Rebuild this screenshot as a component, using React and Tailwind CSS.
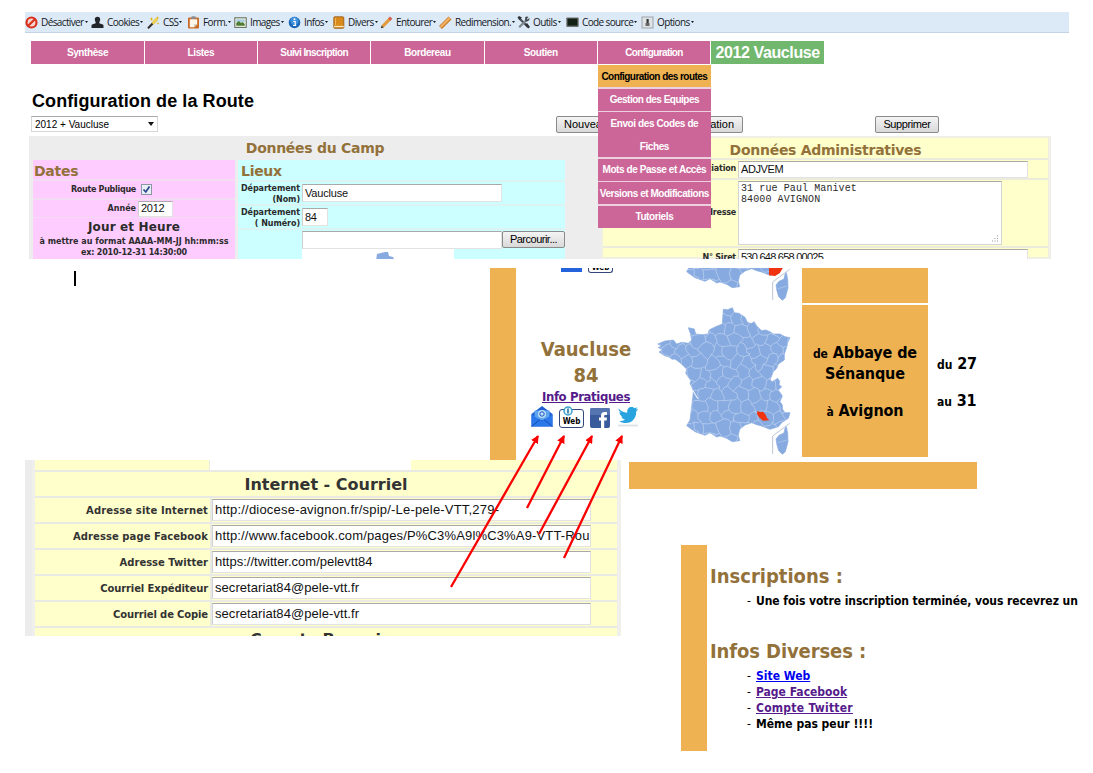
const tools = [
  ["Désactiver", "w-[66px]", "ban"],
  ["Cookies", "w-[56px]", "user"],
  ["CSS", "w-[40px]", "wand"],
  ["Form.", "w-[47px]", "clip"],
  ["Images", "w-[54px]", "image"],
  ["Infos", "w-[44px]", "info"],
  ["Divers", "w-[48px]", "book"],
  ["Entourer", "w-[59px]", "pencil"],
  ["Redimension.", "w-[78px]", "ruler"],
  ["Outils", "w-[49px]", "tools"],
  ["Code source", "w-[75px]", "screen"],
  ["Options", "w-[54px]", "option"],
];

function ToolIcon({ name }) {
  const art = {
    ban: (
      <>
        <circle cx="6.5" cy="6.5" r="5" fill="#f7d6d0" stroke="#d8321f" strokeWidth="2.2" />
        <path d="M3.2 9.8 9.8 3.2" stroke="#d8321f" strokeWidth="2.2" />
      </>
    ),
    user: <path d="M6.500 .8c1.700 0 2.700 1.100 2.700 2.600 0 1.300-.9 2-.9 3.600 0 .8 4.200.8 4.200 2.500V12H.5V9.500C.5 7.800 4.700 7.800 4.700 7c0-1.600-.9-2.300-.9-3.600C3.800 1.900 4.800.8 6.500.8z" fill="#22262b" />,
    wand: (
      <>
        <path d="M1 12.300 9 4" stroke="#33302a" strokeWidth="2" />
        <path d="M5.500 7.600l4.500-4.600" stroke="#f0d050" strokeWidth="3" />
        <path d="M4.500 1l.6 1.400L6.500 3l-1.400.6-.6 1.400-.6-1.400L2.500 3l1.400-.6zM11 6l.4 1 1 .4-1 .4-.4 1-.4-1-1-.4 1-.4zM10.500 0l.5 1.500 1.500.5-1.500.5-.5 1.500-.5-1.500L8.500 2 10 1.500z" fill="#e3b411" />
      </>
    ),
    clip: (
      <>
        <rect x="1" y="1.500" width="11" height="11" rx="1" fill="#c96a28" />
        <path d="M2.800 3.200h7.400v5l-3 3H2.800z" fill="#fbf5ea" />
        <path d="M7.200 11.200v-3h3z" fill="#c9bfae" />
        <rect x="4.300" y=".3" width="4.400" height="2.800" rx="1" fill="#8c8f94" />
      </>
    ),
    image: (
      <>
        <rect x=".8" y="1.800" width="11.400" height="9.600" fill="#f2f3e8" stroke="#5b6b4e" />
        <path d="M2.300 3.300h8.400v3H2.300z" fill="#a9cfe0" />
        <path d="M2.300 9.800V7l2.500-2 2.200 2 1.500-1 2.200 2v1.800z" fill="#4c7c30" />
      </>
    ),
    info: (
      <>
        <circle cx="6.500" cy="6.500" r="5.800" fill="#1766b8" />
        <circle cx="6.500" cy="5" r="4.200" fill="#3f90dc" />
        <path d="M5.200 5.500h2v3.800h.8M5 9.500h3.200" stroke="#fff" strokeWidth="1.200" fill="none" />
        <circle cx="6.500" cy="3.300" r="1" fill="#fff" />
      </>
    ),
    book: (
      <>
        <rect x="1.800" y=".8" width="10" height="11.500" rx="1" fill="#d98a1c" stroke="#94550d" strokeWidth=".8" />
        <path d="M2 10.500h9.800" stroke="#fbe6b8" strokeWidth="1.300" />
        <path d="M3.500 2v7" stroke="#f1b757" />
      </>
    ),
    pencil: (
      <>
        <path d="M2.500 10.500 10 2.800" stroke="#e39a3b" strokeWidth="3.200" />
        <path d="M9.300 3.500 11.200 1.600" stroke="#d65b53" strokeWidth="3.200" />
        <path d="M.8 12.300 1.700 9.400 3.700 11.400z" fill="#3b2d20" />
      </>
    ),
    ruler: (
      <>
        <path d="M1.500 11.500 11 2" stroke="#c9731f" strokeWidth="4" />
        <path d="M1.700 11 10.800 1.900" stroke="#efb265" strokeWidth="2.400" />
      </>
    ),
    tools: (
      <>
        <path d="M2 2 11 11" stroke="#4a5058" strokeWidth="2.200" />
        <path d="M2.200 11.200 9.500 4" stroke="#7d858e" strokeWidth="2.300" />
        <path d="M8 1.500a3 3 0 0 1 3.500-.5L9.800 2.800l.8.8 1.800-1.700a3 3 0 0 1-3.900 3.500z" fill="#41474e" />
        <path d="M.5 1.500 2 0l3 1.500L2.500 4z" fill="#2f3338" />
        <path d="M8 8.500 10 7l3 4-1.800 1.500z" fill="#2f3338" />
      </>
    ),
    screen: (
      <>
        <rect x=".3" y="1.500" width="12.400" height="9.600" rx=".8" fill="#6c7070" />
        <rect x="1.500" y="2.600" width="10" height="7" fill="#142013" />
      </>
    ),
    option: (
      <>
        <rect x="1" y="1" width="11" height="11" fill="#dfe3e6" stroke="#9ca3a9" />
        <path d="M5.500 3h2.200v4H5.500z" fill="#333" />
        <path d="M4.500 7h4v3h-4z" fill="#666" />
      </>
    ),
  };
  return (
    <svg viewBox="0 0 13 13" className="size-[13px] shrink-0" fill="none">
      {art[name]}
    </svg>
  );
}

const menu = [
  ["Gestion des Equipes", "h-[22px] tracking-[-0.5px]"],
  ["Envoi des Codes de Fiches", "h-[45px] tracking-[-0.4px] px-2"],
  ["Mots de Passe et Accès", "h-[22px] tracking-[-0.42px] whitespace-nowrap"],
  ["Versions et Modifications", "h-[22px] tracking-[-0.46px] whitespace-nowrap"],
  ["Tutoriels", "h-[22px] tracking-[-0.4px]"],
];

function Toolbar() {
  return (
    <div className="ml-[25px] flex h-[21px] w-[1044px] items-center border-b border-[#c3d3e4] bg-[#dce9f7] font-['Open_Sans',sans-serif] text-[10px] tracking-[-0.62px] text-[#15181c]">
      {tools.map(([label, width, icon]) => (
        <div key={label} className={"flex shrink-0 items-center " + width}>
          <ToolIcon name={icon} />
          <span className="ml-[3px] whitespace-nowrap">{label}</span>
          <svg viewBox="0 0 3 2" className="ml-px h-[2px] w-[3px] shrink-0">
            <path d="M0 0h3L1.500 2z" fill="#15181c" />
          </svg>
        </div>
      ))}
    </div>
  );
}

function Nav() {
  const cell = "flex h-[23px] w-[112.3px] items-center justify-center bg-[#cc6699] ";
  return (
    <nav className="mt-[8px] ml-[31.4px] flex gap-px font-['Liberation_Sans',sans-serif] text-[10px] font-bold tracking-[-0.6px] text-white">
      {["Synthèse", "Listes", "Suivi Inscription", "Bordereau", "Soutien"].map((t) => (
        <div key={t} className={cell + (t.length < 10 ? "tracking-[-0.4px]" : "")}>{t}</div>
      ))}
      <div className="relative">
        <div className={cell}>Configuration</div>
        <div className="absolute top-[24px] left-0 z-10 flex w-[113px] flex-col gap-[1.600px] bg-[#ecd0de] text-center">
          <div className="flex h-[22px] items-center justify-center bg-[#eeb253] tracking-[-0.54px] whitespace-nowrap text-black">Configuration des routes</div>
          {menu.map(([t, c]) => (
            <div key={t} className={"flex items-center justify-center bg-[#cc6699] leading-[23px] " + c}>{t}</div>
          ))}
        </div>
      </div>
      <div className="flex h-[23px] w-[113px] items-center justify-center bg-[#71b76e] text-[16px] tracking-[-0.4px]">2012 Vaucluse</div>
    </nav>
  );
}

const button = "flex h-[17px] items-center justify-center rounded-[2px] border border-[#8a8a8a] bg-linear-to-b from-[#f4f4f4] to-[#d9d9d9] font-['Liberation_Sans',sans-serif] text-[11px] font-normal whitespace-nowrap text-black ";
const field = "flex items-center overflow-hidden border border-[#e2e2e2] border-t-[#a9a9a9] border-l-[#cfcfcf] bg-white px-[2px] font-['Liberation_Sans',sans-serif] font-normal whitespace-nowrap text-[#111] ";
const title = "font-['DejaVu_Sans',sans-serif] font-bold text-[14px] tracking-[-0.28px] text-[#92713a] ";
const tiny = "font-['DejaVu_Sans',sans-serif] font-bold text-[8px] text-[#2b2b2b] ";

function Dates() {
  return (
    <div className={"w-[202px] bg-[#ffccff] " + tiny}>
      <h3 className={title + "h-[21px] border-b-2 border-[#f3dcf3] pl-px leading-[22px]"}>Dates</h3>
      <div className="flex h-[19px] items-center border-b-2 border-[#f3dcf3]">
        <span className="w-[103px] text-right tracking-[-0.28px]">Route Publique</span>
        <span className="ml-[5px] flex size-[11px] items-center justify-center border border-[#8b97a5] bg-[#e9eff6]">
          <svg viewBox="0 0 9 9" className="size-[9px]">
            <path d="M1.500 4.500 3.800 7 7.500 1.500" stroke="#28468c" strokeWidth="1.700" fill="none" />
          </svg>
        </span>
      </div>
      <div className="flex h-[18px] items-center border-b border-[#f3dcf3]">
        <span className="w-[103px] text-right">Année</span>
        <span className={field + "ml-[2px] h-[16px] w-[35px] text-[11px] tracking-[-0.3px]"}>2012</span>
      </div>
      <div className="pt-[1px] text-center whitespace-nowrap">
        <p className="text-[12px] leading-[16px] tracking-[0.14px]">Jour et Heure</p>
        <p className="pt-[1px] leading-[11px]">à mettre au format AAAA-MM-JJ hh:mm:ss</p>
        <p className="leading-[11px] tracking-[-0.19px]">ex: 2010-12-31 14:30:00</p>
      </div>
    </div>
  );
}

function Lieux() {
  const label = "w-[63px] shrink-0 pr-[1px] pt-[1px] text-right leading-[11px] tracking-[-0.06px] whitespace-nowrap";
  return (
    <div className={"ml-[3px] w-[327px] bg-[#ccffff] " + tiny}>
      <h3 className={title + "h-[22px] border-b-2 border-[#dcf3f3] pl-[3px] leading-[22px]"}>Lieux</h3>
      <div className="flex h-[24px] items-center border-b-2 border-[#dcf3f3]">
        <div className={label}>Département<br />(Nom)</div>
        <span className={field + "ml-[1px] h-[18px] w-[200px] text-[11px] tracking-[-0.18px]"}>Vaucluse</span>
      </div>
      <div className="flex h-[24px] items-center border-b-2 border-[#dcf3f3]">
        <div className={label}>Département<br />( Numéro)</div>
        <span className={field + "ml-[1px] h-[18px] w-[26px] text-[11px] tracking-[-0.3px]"}>84</span>
      </div>
      <div className="ml-[64px] flex pt-[1px]">
        <span className={field + "h-[18px] w-[200px]"} />
        <span className={button + "w-[63px] border-[#6f7f8f] tracking-[-0.5px]"}>Parcourir...</span>
      </div>
      <div className="ml-[64px] h-[20px] w-[152px] bg-white pt-[2px]">
        <svg viewBox="0 0 20 10" className="ml-[74px] h-[10px] w-[20px]">
          <path d="M0 10 1 3 9 1l3 0 1 4 4 1 2 4z" fill="#87aae0" />
        </svg>
      </div>
    </div>
  );
}

function Admin() {
  const row = "flex border-b-2 border-[#ececdc] ";
  const label = "w-[133px] shrink-0 text-right tracking-[-0.2px]";
  return (
    <div className="w-[450px] border-2 border-r-[3px] border-[#efefe4] bg-[#ffffcc] pt-[1px]">
      <h2 className={title + "h-[21px] border-b-2 border-[#ececdc] text-center leading-[22px]"}>Données Administratives</h2>
      <div className={tiny}>
        <div className={row + "h-[20px] items-center"}>
          <span className={label}>Association</span>
          <span className={field + "ml-[2px] h-[17px] w-[290px] text-[11px] tracking-[-0.4px]"}>ADJVEM</span>
        </div>
        <div className={row + "h-[68px] items-center"}>
          <span className={label}>Adresse</span>
          <div className="ml-[2px] flex h-[64px] w-[264px] items-end justify-between border border-[#d5d5d5] border-t-[#a9a9a9] bg-white pl-[2px]">
            <p className="self-start font-['Liberation_Mono',monospace] text-[10px] leading-[11px] font-normal tracking-[0.1px] whitespace-nowrap pt-[1px]">
              31 rue Paul Manivet<br />84000 AVIGNON
            </p>
            <svg viewBox="0 0 10 10" className="size-[10px]">
              <path d="M1 7h1M3.500 7h1M6 7h1M3.500 4.500h1M6 4.500h1M6 2h1" stroke="#999" />
            </svg>
          </div>
        </div>
        <div className="flex h-[19px] items-center">
          <span className={label}>N° Siret</span>
          <span className={field + "ml-[2px] h-[18px] w-[290px] text-[11px] tracking-[-0.75px]"}>530 648 658 00025</span>
        </div>
      </div>
    </div>
  );
}

function TopPanel() {
  return (
    <section className="flex h-[259px] flex-col overflow-hidden pt-[12px]">
      <Toolbar />
      <Nav />
      <h1 className="mt-[27px] ml-[32px] font-['Liberation_Sans',sans-serif] text-[18px] leading-[21px] font-bold tracking-[0.08px] text-black">Configuration de la Route</h1>
      <div className="mt-[4px] ml-[31px] flex h-[17px] shrink-0">
        <div className="flex h-[16px] w-[127px] items-center justify-between border border-[#d6d6d6] border-t-[#a9a9a9] bg-white pr-[3px] pl-[3px] font-['Liberation_Sans',sans-serif] text-[10px] text-black">
          2012 + Vaucluse
          <svg viewBox="0 0 6 4" className="h-[4px] w-[6px]">
            <path d="M0 0h6L3 4z" fill="#111" />
          </svg>
        </div>
        <span className={button + "ml-[398px] w-[60px]"}>Nouveau</span>
        <span className={button + "ml-[64px] w-[63px] justify-end pr-[8px]"}>Validation</span>
        <span className={button + "ml-[132px] w-[64px] tracking-[-0.4px]"}>Supprimer</span>
      </div>
      <div className="mt-[3px] ml-[29px] flex h-[123px] shrink-0 overflow-hidden">
        <div className="h-[123px] w-[572px] bg-[#ededed]">
          <h2 className={title + "h-[24px] text-center leading-[24px]"}>Données du Camp</h2>
          <div className="ml-[4px] flex h-[99px]">
            <Dates />
            <Lieux />
          </div>
        </div>
        <Admin />
      </div>
    </section>
  );
}

const outline = "M235 148 248 149 262 143 268 158 282 160 300 172 308 188 320 190 328 185 335 198 350 212 362 210 375 215 385 222 405 222 420 230 435 233 428 248 425 262 418 282 418 300 400 312 395 325 385 335 375 360 382 365 398 355 404 364 402 374 410 380 400 390 412 408 405 425 412 435 412 447 420 458 435 458 430 475 410 488 400 500 375 508 350 498 335 494 320 488 300 495 284 508 280 525 284 542 262 545 245 535 225 528 215 531 195 518 180 526 150 515 125 497 135 480 140 440 144 405 145 392 135 370 138 362 122 340 125 328 118 320 105 308 90 297 82 298 70 290 60 288 42 276 52 270 40 262 50 258 38 252 60 243 85 240 95 252 110 247 130 250 140 240 136 220 130 203 148 207 152 222 172 224 190 222 192 210 212 200 232 192z";
const corsica = "M424 500 428 520 429 545 421 575 412 583 401 572 396 555 393 537 402 526 417 519 420 505z";

function buildBorders() {
  const rnd = (a, b) => {
    const s = Math.sin(a * 12.9898 + b * 78.233) * 43758.5453;
    return s - Math.floor(s) - 0.5;
  };
  const at = (x, y) => [x + rnd(x, y) * 17, y + rnd(y, x) * 15];
  const link = (p, q) => {
    const mx = (p[0] + q[0]) / 2 + rnd(p[0], q[1]) * 11;
    const my = (p[1] + q[1]) / 2 + rnd(q[0], p[1]) * 11;
    return `M${p[0].toFixed(1)} ${p[1].toFixed(1)}L${mx.toFixed(1)} ${my.toFixed(1)} ${q[0].toFixed(1)} ${q[1].toFixed(1)}`;
  };
  const w = 36;
  const h = 33;
  let d = "";
  for (let r = 0; r < 14; r++) {
    for (let c = 0; c < 13; c++) {
      const x = 20 + c * w + (r % 2 ? w / 2 : 0);
      const y = 130 + r * h;
      const left = at(x, y);
      const top = at(x + w / 2, y - 10);
      const right = at(x + w, y);
      const down = at(x, y + h - 10);
      d += link(left, top) + link(top, right) + link(left, down);
    }
  }
  return d;
}
const borders = buildBorders();

function France({ children }) {
  return (
    <>
      <path d={outline} fill="#87aae0" stroke="#87aae0" strokeWidth="2" strokeLinejoin="round" />
      <path d={borders} clipPath="url(#france)" fill="none" stroke="#c9daf3" strokeWidth="1.800" />
      <path d="M144 392 158 416" stroke="#fff" strokeWidth="3" />
      <path d={corsica} fill="#87aae0" stroke="#87aae0" strokeWidth="2" />
      <path d="M399 548 426 540" stroke="#c9daf3" strokeWidth="1.500" />
      <path d="M383 582V528L434 490" fill="none" stroke="#a9b8cc" strokeWidth="2.400" />
      {children}
    </>
  );
}

function MailIcon() {
  return (
    <svg viewBox="0 0 21 21" className="h-[21px] w-[22px]">
      <path d="M0 8 10.500 0 21 8v12.500H0z" fill="#1f5fd0" />
      <path d="M3 4.500h15V14H3z" fill="#5da4f0" />
      <circle cx="10.500" cy="8" r="4" fill="#bfe0fb" />
      <circle cx="10.500" cy="8" r="2.200" fill="none" stroke="#1b4fb8" />
      <path d="M0 8.500 10.500 15 21 8.500v12H0z" fill="#2a78ea" />
      <path d="M0 20.500 8.500 13.500M21 20.500 12.500 13.500" stroke="#174cb5" />
    </svg>
  );
}

function WebIcon() {
  return (
    <div className="relative mt-[3px] flex h-[19px] w-[25px] items-end justify-center rounded-[3px] border border-[#33477c] bg-white">
      <span className="font-['DejaVu_Sans_Condensed','DejaVu_Sans',sans-serif] text-[8px] leading-[11px] font-bold text-black">Web</span>
      <svg viewBox="0 0 10 10" className="absolute -top-[4px] left-[3px] size-[10px]">
        <circle cx="5" cy="5" r="4" fill="#e4f5fb" stroke="#3aa0c8" strokeWidth="1.500" />
        <path d="M5 2.500v5" stroke="#226f99" strokeWidth="1.500" />
      </svg>
    </div>
  );
}

function FacebookIcon() {
  return (
    <svg viewBox="0 0 20 20" className="h-[20px] w-[20px]">
      <rect width="20" height="20" rx="2" fill="#3b5c9c" />
      <path d="M0 2a2 2 0 0 1 2-2h16a2 2 0 0 1 2 2v5H0z" fill="#5475b0" />
      <path d="M11 20v-7.500H9V9.500h2V7.800C11 5 12.500 4 14.800 4h2.200v3h-1.400c-1.100 0-1.400.4-1.400 1.300v1.200H17l-.4 3h-2.400V20z" fill="#fff" />
    </svg>
  );
}

function TwitterIcon() {
  return (
    <svg viewBox="0 0 22 21" className="h-[21px] w-[22px]">
      <path d="M1.500 2.500c2.300 2.700 5 4 8.800 4.200C9.700 3 12 1 14.500 1c1.300 0 2.300.5 3.100 1.300l2.800-1-1.500 2.300 2.300-.5-2 2.300C19.500 12 15 17 8.800 17c-2.600 0-4.700-.6-6.600-1.800 2.200.1 4-.4 5.800-1.700-2-.2-3.200-1.300-3.800-2.900h1.700C3.800 10 2.500 8.500 2.400 6.300l1.800.5C2.200 5.500 1.500 4 1.500 2.500z" fill="#27a4e0" />
      <path d="M1 19.500h20" stroke="#dfe3e6" strokeWidth="2" />
    </svg>
  );
}

const tahoma = "font-['DejaVu_Sans_Condensed','DejaVu_Sans',sans-serif] font-bold ";

function MapPanel() {
  const small = "text-[12px] leading-none";
  return (
    <section className="mt-[9px] flex h-[192px]">
      <div className="mt-[3px] ml-[74px] h-[15px] w-[2px] bg-black" />
      <div className="ml-[414px] w-[26px] bg-[#eeb253]" />
      <div className={"flex w-[140px] flex-col items-center overflow-hidden " + tahoma}>
        <div className="flex h-[5px] w-full pl-[45px]">
          <span className="h-[4px] w-[21px] bg-[#2463dc]" />
          <span className="ml-[6px] flex h-[5px] w-[25px] items-end justify-center overflow-hidden rounded-b-[3px] border border-t-0 border-[#33477c] text-[8px] leading-[9px] text-black">Web</span>
        </div>
        <p className="mt-[63px] text-[20px] leading-[26px] text-[#92713a]">Vaucluse</p>
        <p className="text-[20px] leading-[26px] text-[#92713a]">84</p>
        <a className="mt-px text-[13px] leading-[16px] tracking-[-0.38px] text-[#551a8b] underline">Info Pratiques</a>
        <div className="mt-px flex w-full gap-[6px] pl-[15px]">
          <MailIcon />
          <WebIcon />
          <div className="pt-[2px]"><FacebookIcon /></div>
          <div className="ml-[1px]"><TwitterIcon /></div>
        </div>
      </div>
      <svg viewBox="33 24 438 576" className="h-[192px] w-[146px]">
        <clipPath id="france"><path d={outline} /></clipPath>
        <g transform="translate(0 -462)">
          <France>
            <path d="M372 470 412 470 412 488 404 502 390 510 372 508z" fill="#f0320f" />
          </France>
        </g>
        <France>
          <path d="M337 453 346 456 354 455 362 464 366 474 373 481 354 482 342 472 336 462z" fill="#f0320f" />
        </France>
      </svg>
      <div className="flex w-[126px] flex-col">
        <div className="h-[35px] bg-[#eeb253]" />
        <div className={"mt-[2px] h-[152px] bg-[#eeb253] pt-[37px] text-center text-[16px] leading-[21px] tracking-[-0.1px] text-black " + tahoma}>
          <p className="h-[21px]"><span className={small}>de</span> Abbaye de</p>
          <p className="h-[21px]">Sénanque</p>
          <p className="mt-[16px] h-[21px]"><span className={small}>à</span> Avignon</p>
        </div>
      </div>
      <div className={"ml-[9px] pt-[85px] text-[16px] leading-[21px] tracking-[-0.1px] whitespace-nowrap text-black " + tahoma}>
        <p className="h-[21px]"><span className={small}>du</span> 27</p>
        <p className="mt-[16px] h-[21px]"><span className={small}>au</span> 31</p>
      </div>
    </section>
  );
}

const rows = [
  ["Adresse site Internet", "http://diocese-avignon.fr/spip/-Le-pele-VTT,279-", "tracking-[0.13px]", "tracking-[0.2px]"],
  ["Adresse page Facebook", "http://www.facebook.com/pages/P%C3%A9l%C3%A9-VTT-Route", "tracking-[0.08px]", "tracking-[0.16px]"],
  ["Adresse Twitter", "https://twitter.com/pelevtt84", "tracking-[0px]", "tracking-[0px]"],
  ["Courriel Expéditeur", "secretariat84@pele-vtt.fr", "tracking-[-0.1px]", "tracking-[0.06px]"],
  ["Courriel de Copie", "secretariat84@pele-vtt.fr", "tracking-[-0.14px]", "tracking-[0.06px]"],
];

function Internet() {
  const heading = "font-['DejaVu_Sans',sans-serif] text-[16px] font-bold text-[#333] whitespace-nowrap ";
  return (
    <div className="flex h-[176px] w-[596px] overflow-hidden border-l-[7px] border-[#ececec] bg-[#efefec] pl-[3px]">
      <div className="w-[582px] bg-[#ffffcc]">
        <div className="flex h-[12px] border-b-2 border-[#eaeae4]">
          <div className="w-[175px] border-r border-[#eaeae4]" />
          <div className="w-[201px] bg-white" />
        </div>
        <h3 className={heading + "flex h-[26px] items-center justify-center border-b-2 border-[#eaeae4] pt-px"}>Internet - Courriel</h3>
        {rows.map(([label, value, lt, vt]) => (
          <div key={label} className="flex h-[26px] items-center border-b-2 border-[#eaeae4]">
            <span className={"w-[173px] text-right font-['DejaVu_Sans',sans-serif] text-[10px] font-bold whitespace-nowrap text-[#333] " + lt}>{label}</span>
            <div className="ml-[2px] h-[24px] w-[401px] border-l-2 border-[#eaeae4] pt-[1px]">
              <div className={field + "h-[22px] w-[379px] text-[13px] " + vt}>{value}</div>
            </div>
          </div>
        ))}
        <p className={heading + "pl-[215px] pt-[2px] leading-[20px] tracking-[-0.35px]"}>Compte Bancaire</p>
      </div>
    </div>
  );
}

function Infos() {
  const h = "text-[20px] leading-[24px] text-[#92713a]";
  const dash = <span className="inline-block w-[9px] font-normal">-</span>;
  return (
    <div className="ml-[52px] flex h-[206px]">
      <div className="w-[26px] bg-[#eeb253]" />
      <div className={"pl-[3px] text-[12px] leading-[16px] whitespace-nowrap text-black " + tahoma}>
        <h3 className={h + " pt-[19px]"}>Inscriptions :</h3>
        <p className="mt-[5px] ml-[37px] tracking-[-0.06px]">{dash}Une fois votre inscription terminée, vous recevrez un</p>
        <h3 className={h + " mt-[30px] tracking-[-0.1px]"}>Infos Diverses :</h3>
        <ul className="mt-[5px] ml-[37px]">
          <li>{dash}<a className="text-[#0000ee] underline">Site Web</a></li>
          <li>{dash}<a className="text-[#551a8b] underline">Page Facebook</a></li>
          <li>{dash}<a className="tracking-[0.26px] text-[#551a8b] underline">Compte Twitter</a></li>
          <li>{dash}Même pas peur !!!!</li>
        </ul>
      </div>
    </div>
  );
}

function Arrows() {
  return (
    <svg viewBox="0 0 1093 773" className="pointer-events-none absolute inset-0 h-[773px] w-[1093px]">
      <defs>
        <marker id="tip" markerWidth="10" markerHeight="8" refX="7" refY="4" orient="auto" markerUnits="userSpaceOnUse">
          <path d="M0 0 8 4 0 8z" fill="#fa0000" />
        </marker>
      </defs>
      <g stroke="#fa0000" strokeWidth="2.300">
        <path d="M451 587 538 436" markerEnd="url(#tip)" />
        <path d="M527 508 564 436" markerEnd="url(#tip)" />
        <path d="M539 534 592 436" markerEnd="url(#tip)" />
        <path d="M564 558 622 436" markerEnd="url(#tip)" />
      </g>
    </svg>
  );
}

export default function App() {
  return (
    <main className="relative h-[773px] w-[1093px] overflow-hidden bg-white">
      <TopPanel />
      <MapPanel />
      <section className="flex pl-[25px]">
        <Internet />
        <div className="ml-[8px] pt-[2px]">
          <div className="mb-[56px] h-[27px] w-[348px] bg-[#eeb253]" />
          <Infos />
        </div>
      </section>
      <Arrows />
    </main>
  );
}
